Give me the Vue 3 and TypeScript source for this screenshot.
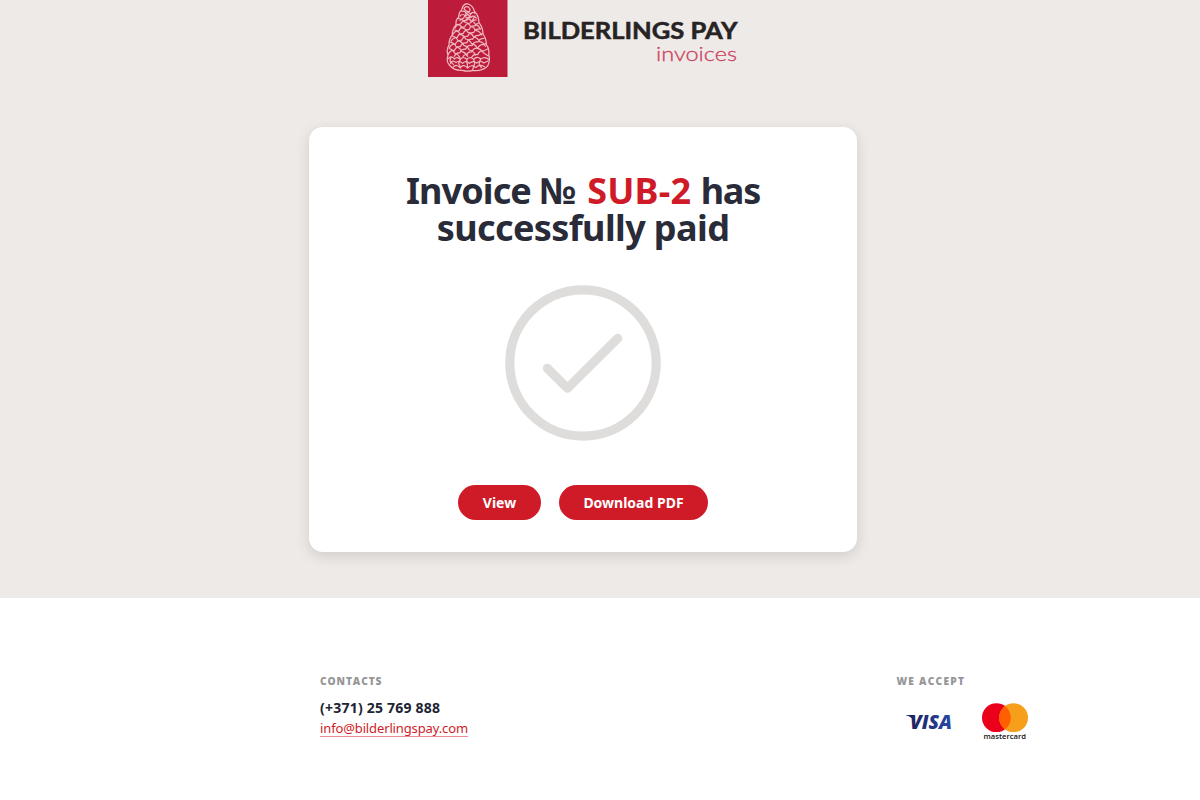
<script setup lang="ts">
interface Action { label: string; kind: string }
const actions: Action[] = [
  { label: 'View', kind: 'view' },
  { label: 'Download PDF', kind: 'download' },
]

// Pine cone strokes, from the tip down to the base.
const tip: string[] = [
  'M72 25Q78 16 86 22Q94 30 87 35Q76 36 72 25',
  'M66 34Q74 31 79 40Q86 35 92 42Q99 33 105 40',
  'M60 48Q68 39 77 48L84 43Q90 55 99 48L109 54',
  'M79 40L71 54L60 61M92 42L84 58L72 64M105 48L96 63',
]
const scales: string[] = [
  // strokes falling to the right
  'M56 56Q66 56 74 66Q84 67 91 78Q101 80 107 91Q118 92 125 105',
  'M50 73Q60 73 67 84Q78 86 84 97Q95 99 101 111Q113 113 119 125Q130 126 136 139',
  'M43 90Q54 90 60 103Q71 105 77 117Q88 119 95 131Q106 133 112 145Q124 147 130 158L145 168',
  'M37 108Q48 109 54 122Q65 124 71 136Q82 138 88 150Q100 152 106 165',
  'M32 127Q43 128 49 141Q60 143 66 155Q76 157 83 169',
  'M27 146Q37 147 44 159Q54 162 60 173',
  'M78 52Q87 53 93 63Q102 64 107 74Q116 76 121 87',
  // strokes rising to the right
  'M45 84Q51 72 62 72Q67 61 78 60Q83 52 95 51',
  'M38 104Q45 92 57 93Q61 80 74 81Q79 69 91 69Q97 59 109 60',
  'M33 124Q40 111 51 113Q56 100 69 101Q75 88 87 89Q92 77 105 78Q109 70 116 69',
  'M28 143Q35 130 46 133Q52 119 65 121Q70 107 83 109Q89 96 101 98Q106 86 121 87',
  'M25 163Q32 149 43 152Q49 138 61 140Q67 127 80 129Q86 115 98 118Q104 105 116 106L128 101',
  'M43 169Q48 157 59 159Q65 146 77 148Q83 134 96 137Q102 124 114 126Q119 115 132 115',
  'M69 171Q72 162 80 165Q84 153 95 156Q102 143 113 145Q119 132 131 134L138 130',
  'M95 172Q101 160 113 164Q119 151 130 153L143 147',
]
const base: string[] = [
  'M25 176Q34 165 43 177Q51 168 61 178Q70 167 80 178Q91 168 101 178Q111 167 122 177Q134 168 146 178',
  'M31 190Q38 178 48 188Q57 179 68 190Q77 180 88 190Q99 180 110 189Q121 179 131 189L144 183',
  'M39 202Q48 190 60 203Q71 190 83 204Q95 191 107 203Q119 191 133 200',
  'M33 171L30 183L40 193M61 178L56 190L62 204M80 178L83 202M101 178L104 191L98 209M122 177L117 191L124 203',
]
</script>

<template>
  <div class="page">
    <main class="hero">
      <svg class="logo" width="312" height="77" viewBox="0 0 312 77" role="img" aria-label="Bilderlings Pay invoices">
        <rect width="79.5" height="77" fill="#bd1b3a" />
        <g class="cone" transform="translate(12 0) scale(.3333)">
          <path d="M80 11Q68 14 65 30Q56 38 56 52Q46 60 48 75Q36 88 37 105Q26 118 27 135Q18 150 24 165Q18 184 28 195Q43 213 67 211Q83 216 98 211Q126 215 143 198Q152 180 146 163Q149 147 139 134Q140 118 129 102Q129 83 117 68Q116 45 104 35Q98 14 80 11Z" />
          <path v-for="d in tip" :key="d" :d="d" />
          <path v-for="d in scales" :key="d" :d="d" />
          <path v-for="d in base" :key="d" :d="d" />
        </g>
        <text class="brand" x="95" y="39.300" textLength="214.500" lengthAdjust="spacingAndGlyphs">BILDERLINGS PAY</text>
        <text class="product" x="228" y="60.600" textLength="81" lengthAdjust="spacingAndGlyphs">invoices</text>
      </svg>

      <section class="card">
        <h1>
          <span class="line"><span class="invoice">Invoice</span> <span class="no">№</span> <em>SUB-2</em> <span class="has">has</span></span>
          <span class="line second">successfully paid</span>
        </h1>
        <svg class="check" width="156" height="156" viewBox="0 0 156 156" fill="none" stroke="#dfdddc">
          <circle cx="78" cy="78" r="73.200" stroke-width="9.200" />
          <path d="M42.300 83.200L62.500 103.200L112.800 53.200" stroke-width="9" stroke-linecap="round" stroke-linejoin="round" />
        </svg>
        <div class="actions">
          <button v-for="a in actions" :key="a.kind" type="button" :class="a.kind">{{ a.label }}</button>
        </div>
      </section>
    </main>

    <footer>
      <div class="contacts">
        <h2>CONTACTS</h2>
        <p class="phone">(+371) 25 769 888</p>
        <a class="mail">info@bilderlingspay.com</a>
      </div>
      <div class="accept">
        <h2 class="wide">WE ACCEPT</h2>
        <div class="cards">
          <svg class="visa-logo" width="48" height="16" viewBox="0 0 48 16" role="img" aria-label="Visa">
            <defs>
              <linearGradient id="visa" x1="0" x2="1" y1="0" y2="0">
                <stop offset="0" stop-color="#20205f" />
                <stop offset="1" stop-color="#254aa5" />
              </linearGradient>
            </defs>
            <path fill="#20205f" d="M.8 1h6.400l2 1.500.8 5Q6.500 2.500.8 1.300z" />
            <text class="visa" x="5" y="15.200" textLength="42" lengthAdjust="spacingAndGlyphs">VISA</text>
          </svg>
          <svg class="mc" width="48" height="40" viewBox="0 0 48 40" role="img" aria-label="Mastercard">
            <circle cx="15.400" cy="14.700" r="14.400" fill="#eb001b" />
            <circle cx="32.600" cy="14.700" r="14.400" fill="#f79e1b" />
            <path fill="#ff5f00" d="M24 3.150a14.400 14.400 0 0 1 0 23.100a14.400 14.400 0 0 1 0-23.100z" />
            <text class="mc-name" x="2.500" y="35.800" textLength="42.500" lengthAdjust="spacingAndGlyphs">mastercard</text>
          </svg>
        </div>
      </div>
    </footer>
  </div>
</template>

<style>
body { margin: 0; background: #fff; }
</style>

<style scoped>
.page { width: 1200px; height: 800px; overflow: hidden; background: #fff; font-family: "Noto Sans", "Open Sans", sans-serif; }
.hero { height: 598px; background: #eeeae7; }
.logo { display: block; margin-left: 428px; }
.cone { fill: none; stroke: #f0b9c1; stroke-width: 3.700; stroke-linecap: round; stroke-linejoin: round; }
.brand { font: 700 22px Lato, sans-serif; fill: #272324; stroke: #272324; stroke-width: .5px; }
.product { font: 300 19.500px Lato, sans-serif; fill: #cc3f5f; stroke: #cc3f5f; stroke-width: .3px; }
.card {
  box-sizing: border-box; width: 548px; height: 425px; margin: 50px 0 0 309px; padding-top: 45px;
  border-radius: 14px; background: #fff; box-shadow: 0 4px 14px rgba(0, 0, 0, .13);
  display: flex; flex-direction: column; align-items: center;
}
h1 { margin: 0; font-size: 36px; line-height: 37px; font-weight: 700; color: #292b39; text-align: center; white-space: nowrap; }
.line { display: block; }
.invoice { letter-spacing: -.9px; }
.no { letter-spacing: -.5px; margin-left: -1px; }
.has { letter-spacing: -1.200px; }
.second { letter-spacing: -.6px; }
h1 em { font-style: normal; color: #cf1b28; letter-spacing: .2px; margin-left: 2px; }
.check { margin-top: 39px; }
.actions { display: flex; gap: 18px; margin-top: 44px; }
button { height: 35px; padding: 0; border: 0; border-radius: 18px; background: #cf1b28; color: #fff; font: 700 14px/35px "Noto Sans", sans-serif; }
.view { width: 83px; }
.download { width: 149px; }
footer { display: flex; padding: 76px 0 0 320px; }
.contacts { width: 576.500px; }
h2 { margin: 0; font: 800 10.200px/15px "Open Sans", sans-serif; letter-spacing: .9px; color: #969699; }
.wide { letter-spacing: 1.250px; }
.phone { margin: 8px 0 0; font-size: 14px; line-height: 22px; font-weight: 700; letter-spacing: .22px; color: #202333; }
.mail { display: block; width: 148px; padding-top: 1px; font-size: 13px; line-height: 16px; letter-spacing: -.13px; white-space: nowrap; color: #cf1b28; border-bottom: 1px solid #ee8c95; }
.cards { display: flex; align-items: flex-start; padding: 25px 0 0 8px; }
.visa-logo { overflow: visible; }
.visa { font: italic 800 19px "Open Sans", sans-serif; fill: url(#visa); }
.mc { margin: -11px 0 0 28px; }
.mc-name { font: 600 7.500px "Open Sans", sans-serif; fill: #111; }
</style>
